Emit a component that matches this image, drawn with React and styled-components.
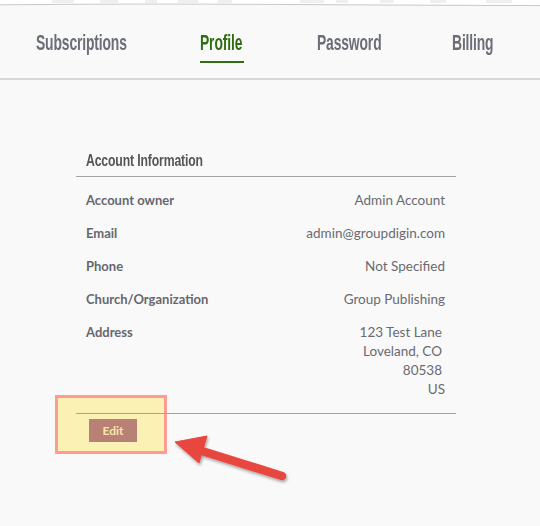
import React from "react";
import styled, { createGlobalStyle } from "styled-components";

const GlobalStyle = createGlobalStyle`
  html, body { margin: 0; padding: 0; background: #f9f9f9; }
  body { font-family: "Source Sans Pro", Lato, "Noto Sans", sans-serif; }
`;

const Page = styled.div`
  position: relative;
  width: 540px;
  height: 526px;
  overflow: hidden;
  background: #f9f9f9;
`;

const TornEdge = styled.svg`
  position: absolute;
  left: 0;
  top: 0;
  width: 540px;
  height: 10px;
`;

const TabBar = styled.nav`
  display: flex;
  align-items: flex-start;
  gap: 73px;
  height: 48px;
  padding: 30px 0 0 36px;
  border-bottom: 2px solid #d8d8d8;
`;

const Tab = styled.div`
  display: flex;
  width: ${(p) => p.$w}px;
  height: 26px;
  padding-bottom: 5px;
  border-bottom: 2px solid ${(p) => (p.$active ? "#2f6f12" : "transparent")};
  color: ${(p) => (p.$active ? "#2f6f12" : "#6b6d77")};
`;

const CondensedText = styled.span`
  display: inline-block;
  white-space: nowrap;
  font-family: "Liberation Sans", Arial, sans-serif;
  font-weight: 700;
  font-size: ${(p) => p.$size || 22}px;
  line-height: ${(p) => p.$lh || 26}px;
  letter-spacing: -0.2px;
  transform: scaleX(${(p) => p.$sx || 0.63});
  transform-origin: left center;
`;

const Card = styled.section`
  position: relative;
  z-index: 1;
  width: 380px;
  margin: 0 0 0 76px;
  padding-top: 71px;
`;

const Heading = styled.h2`
  display: flex;
  margin: 0;
  padding: 0 10px 5px;
  height: 20px;
  font-size: 16px;
  line-height: 20px;
  color: #555558;
  border-bottom: 1px solid #a3a3a3;
`;

const List = styled.dl`
  margin: 0;
  padding: 7px 0 0;
`;

const Row = styled.div`
  display: flex;
  justify-content: space-between;
  align-items: flex-start;
  padding: 7px 11px 7px 10px;
  font-size: 13px;
  line-height: 19px;
`;

const Label = styled.dt`
  font-weight: 700;
  color: #67676d;
`;

const Value = styled.dd`
  margin: 0;
  text-align: right;
  color: #6a6a70;
  font-size: 13.5px;
  display: flex;
  flex-direction: column;
  align-items: flex-end;
`;

const Line = styled.span`
  padding-right: ${(p) => (p.$trail ? "3px" : "0")};
`;

const Footer = styled.div`
  margin-top: 7px;
  border-top: 1px solid #a3a3a3;
  padding: 5px 0 0 13px;
`;

const EditButton = styled.button`
  display: block;
  width: 48px;
  height: 23px;
  border: none;
  background: #b98175;
  color: #f8e8a8;
  font-family: "Source Sans Pro", Lato, "Noto Sans", sans-serif;
  font-weight: 700;
  font-size: 12px;
  padding: 0;
  cursor: pointer;
`;

const Highlight = styled.div`
  position: absolute;
  z-index: 0;
  left: 55px;
  top: 395px;
  width: 106px;
  height: 53px;
  border: 3px solid #ff9a94;
  background: #fcf1b4;
  pointer-events: none;
`;

const ArrowSvg = styled.svg`
  position: absolute;
  z-index: 2;
  left: 160px;
  top: 420px;
  width: 140px;
  height: 70px;
  overflow: visible;
`;

const tabs = [
  ["Subscriptions", 91],
  ["Profile", 44],
  ["Password", 62],
  ["Billing", 42],
];

const rows = [
  ["Account owner", ["Admin Account"]],
  ["Email", ["admin@groupdigin.com"]],
  ["Phone", ["Not Specified"]],
  ["Church/Organization", ["Group Publishing"]],
  ["Address", ["123 Test Lane", "Loveland, CO", "80538", "US"]],
];

export default function App() {
  return (
    <>
      <GlobalStyle />
      <Page>
        <TabBar>
          {tabs.map(([t, w]) => (
            <Tab key={t} $w={w} $active={t === "Profile"}>
              <CondensedText>{t}</CondensedText>
            </Tab>
          ))}
        </TabBar>
        <TornEdge viewBox="0 0 540 10">
          <rect x="0" y="0" width="540" height="5" fill="#ffffff" />
          <g fill="#ececec" opacity="0.8">
            <rect x="52" y="0" width="22" height="3" />
            <rect x="100" y="0" width="18" height="3" />
            <rect x="145" y="0" width="12" height="3" />
            <rect x="178" y="0" width="20" height="3" />
            <rect x="218" y="0" width="14" height="3" />
            <rect x="300" y="0" width="24" height="3" />
            <rect x="336" y="0" width="12" height="3" />
            <rect x="380" y="0" width="14" height="3" />
            <rect x="430" y="0" width="16" height="3" />
            <rect x="486" y="0" width="26" height="3" />
          </g>
          <path d="M0 4.8 Q 140 3.6 270 4.4 T 540 5.6" stroke="#c8c8c8" strokeWidth="1" fill="none" />
        </TornEdge>
        <Card>
          <Heading>
            <CondensedText $size={17} $lh={20} $sx={0.72}>Account Information</CondensedText>
          </Heading>
          <List>
            {rows.map(([label, lines]) => (
              <Row key={label}>
                <Label>{label}</Label>
                <Value>
                  {lines.map((l, i) => (
                    <Line key={l} $trail={lines.length > 1 && i < lines.length - 1}>
                      {l}
                    </Line>
                  ))}
                </Value>
              </Row>
            ))}
          </List>
          <Footer>
            <EditButton>Edit</EditButton>
          </Footer>
        </Card>
        <Highlight />
        <ArrowSvg viewBox="0 0 140 70">
          <defs>
            <filter id="sh" x="-20%" y="-20%" width="140%" height="160%">
              <feDropShadow dx="1" dy="2" stdDeviation="1.6" floodColor="#000" floodOpacity="0.35" />
            </filter>
          </defs>
          <g filter="url(#sh)" fill="#e8463f" stroke="#e8463f">
            <line x1="122" y1="56" x2="42" y2="31" strokeWidth="8.5" strokeLinecap="round" />
            <polygon points="15,22 47,16 39,43" strokeWidth="1" strokeLinejoin="round" />
          </g>
        </ArrowSvg>
      </Page>
    </>
  );
}
